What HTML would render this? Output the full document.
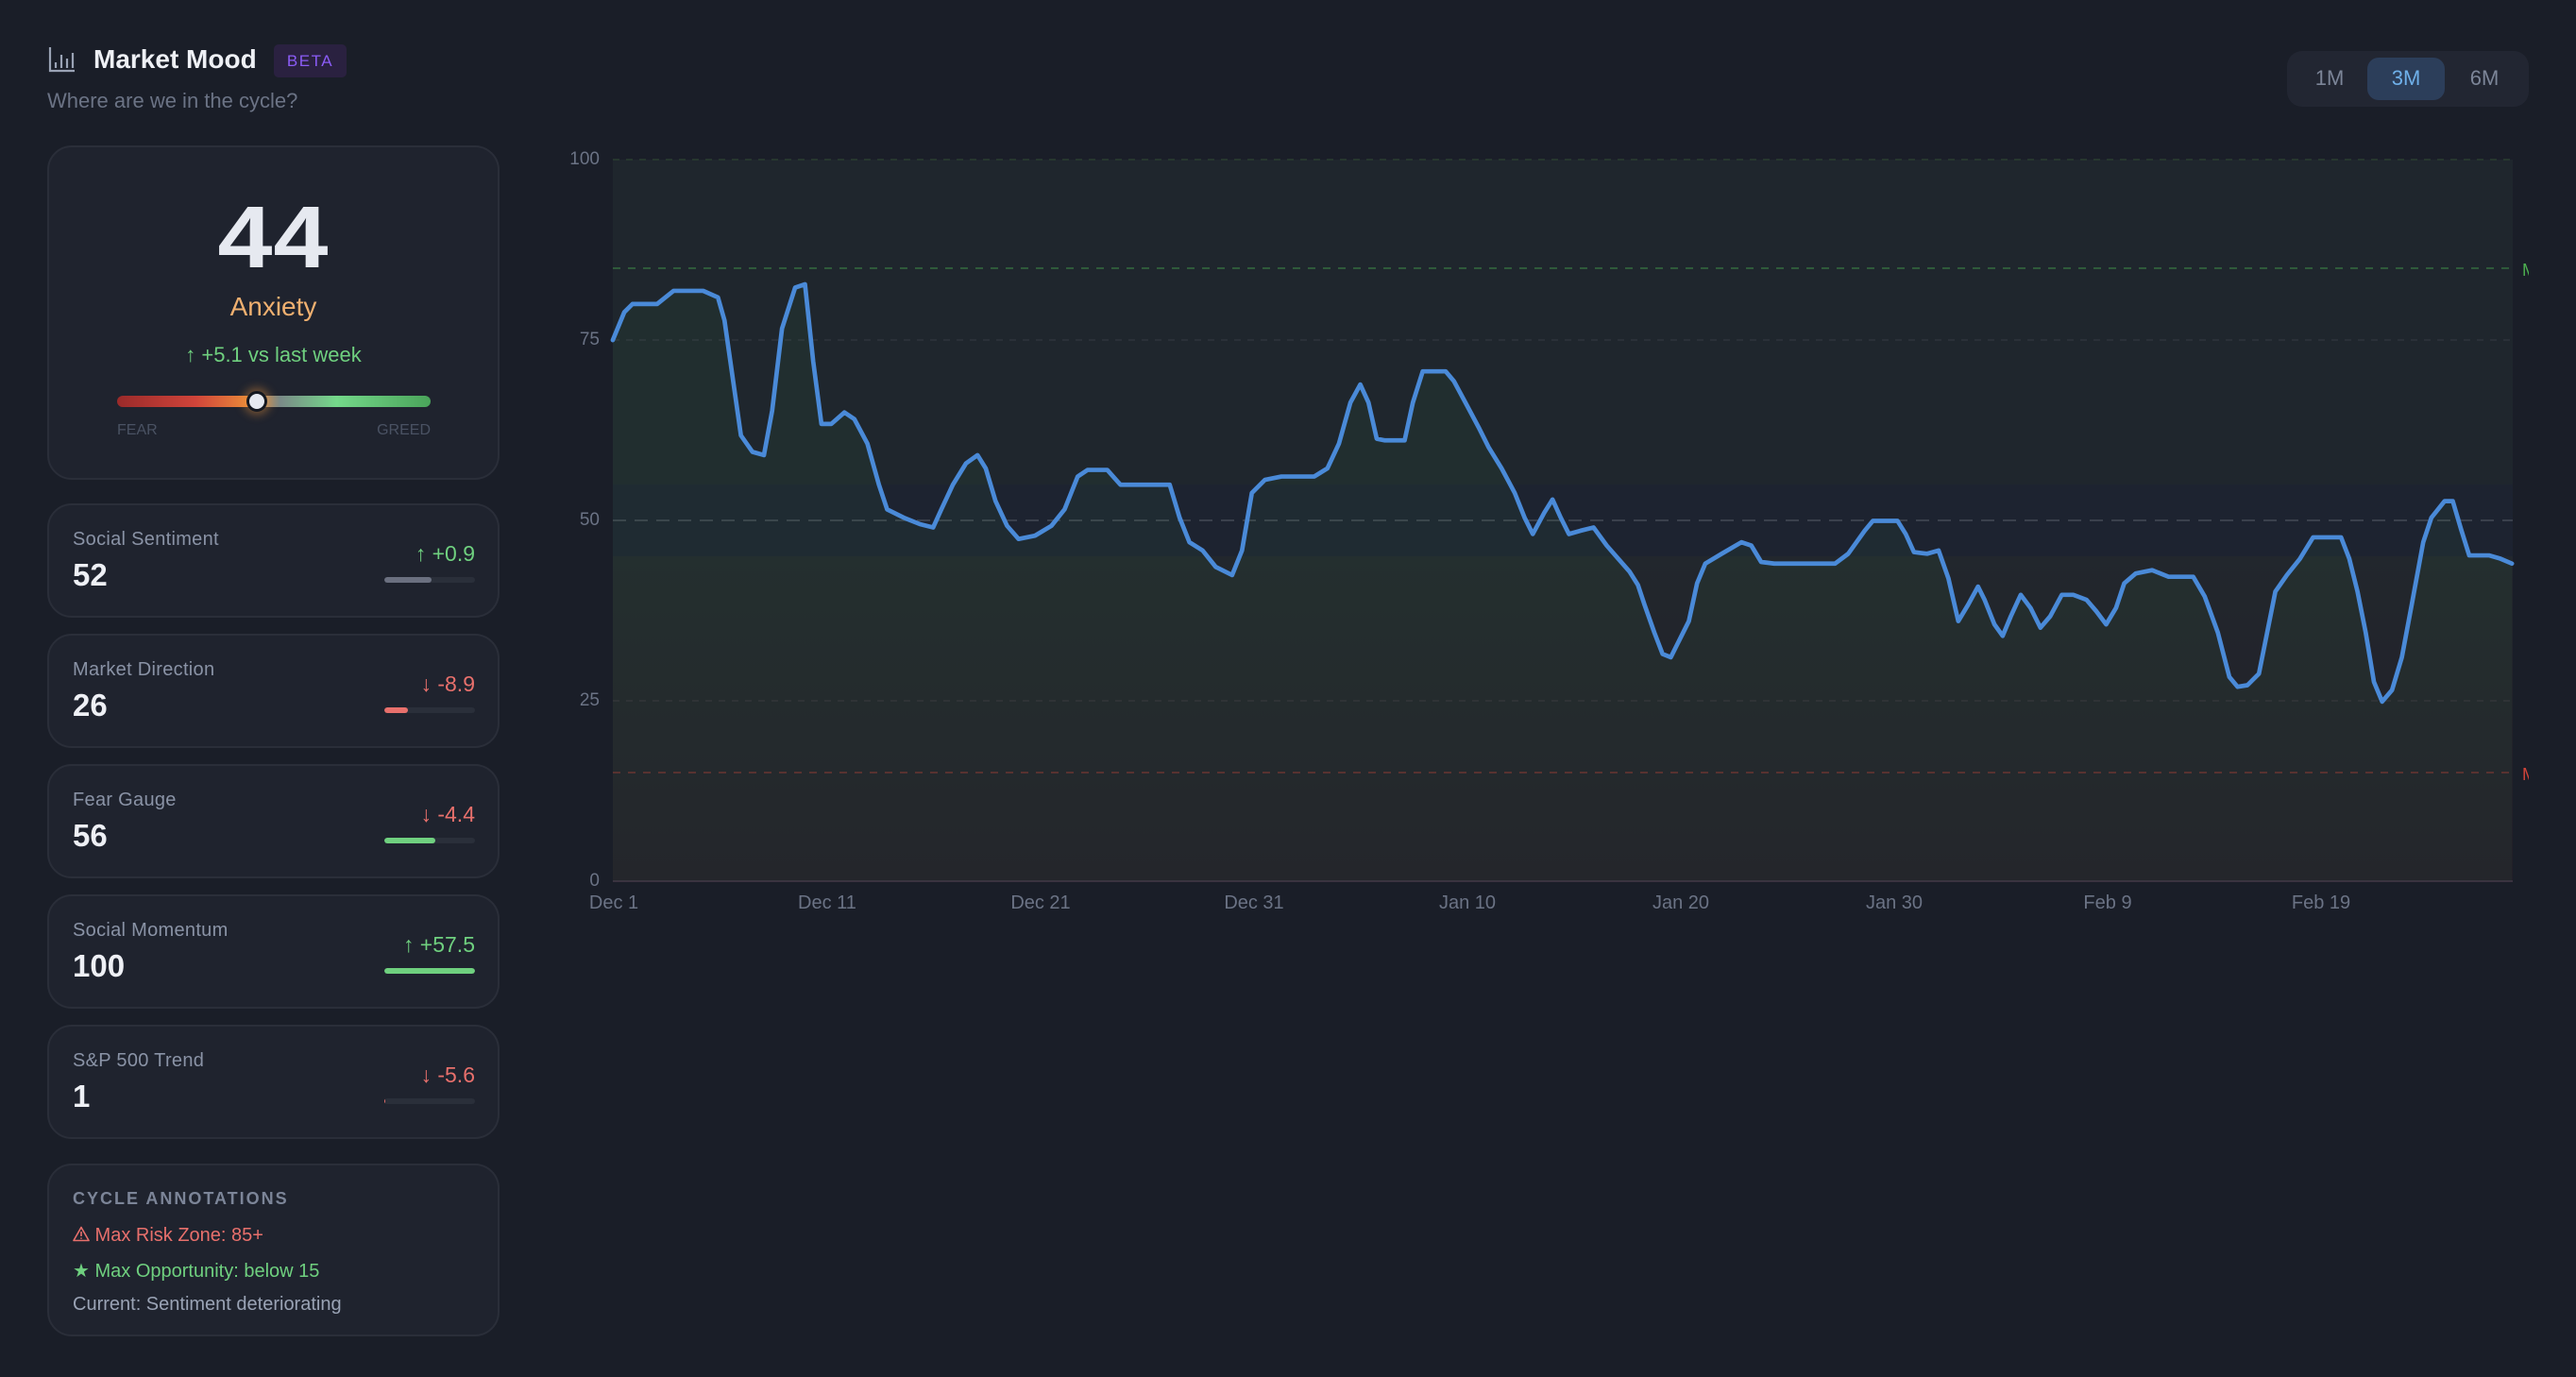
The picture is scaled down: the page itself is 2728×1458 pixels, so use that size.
<!DOCTYPE html>
<html><head><meta charset="utf-8">
<style>
*{margin:0;padding:0;box-sizing:border-box}
html,body{width:2728px;height:1458px;background:#1a1e28;overflow:hidden;font-family:"Liberation Sans",sans-serif;}
.a{position:absolute}
.card{position:absolute;left:50px;width:479px;background:#1f232e;border:2px solid #2a2e39;border-radius:26px}
.lbl{position:absolute;left:25px;top:25px;font-size:20px;color:#8a93a6;letter-spacing:.3px}
.val{position:absolute;left:25px;top:55px;font-size:33px;font-weight:bold;color:#eef0f5}
.chg{position:absolute;right:24px;top:38px;font-size:23px}
.bar{position:absolute;right:24px;top:76px;width:96px;height:6px;border-radius:3px;background:#2a2f3a;overflow:hidden}
.bar i{display:block;height:100%;border-radius:3px}
.g{color:#6fd07f}.r{color:#e8706c}
.yl{position:absolute;width:60px;text-align:right;font-size:19px;color:#6b7385;left:575px}
.xl{position:absolute;top:945px;width:120px;margin-left:-60px;text-align:center;font-size:20px;color:#6b7385}
</style></head><body>

<!-- header -->
<svg class="a" style="left:50px;top:48px" width="30" height="30" viewBox="0 0 30 30"><path d="M3 2V27H29" fill="none" stroke="#9aa3b5" stroke-width="2.2"/><path d="M9 18V24M15 10V24M21 14V24M27 8V24" stroke="#9aa3b5" stroke-width="2.2"/></svg>
<div class="a" style="left:99px;top:47px;font-size:28px;font-weight:bold;color:#eef0f5">Market Mood</div>
<div class="a" style="left:290px;top:47px;width:77px;height:35px;border-radius:5px;background:#2a2140;color:#8b5cf6;font-size:17px;letter-spacing:1.5px;text-align:center;line-height:35px">BETA</div>
<div class="a" style="left:50px;top:94px;font-size:22px;color:#6b7385">Where are we in the cycle?</div>

<!-- toggle -->
<div class="a" style="left:2422px;top:54px;width:256px;height:59px;border-radius:16px;background:#222632"></div>
<div class="a" style="left:2507px;top:61px;width:82px;height:45px;border-radius:12px;background:#2c3e5a"></div>
<div class="a" style="left:2427px;top:70px;width:80px;text-align:center;font-size:22px;color:#7c8598">1M</div>
<div class="a" style="left:2508px;top:70px;width:80px;text-align:center;font-size:22px;color:#6fb0ea">3M</div>
<div class="a" style="left:2591px;top:70px;width:80px;text-align:center;font-size:22px;color:#7c8598">6M</div>

<!-- main card -->
<div class="card" style="top:154px;height:354px">
  <div class="a" style="left:0;width:100%;top:42px;text-align:center;font-size:93px;font-weight:bold;color:#e6e9f0;letter-spacing:1px;transform:scaleX(1.12)">44</div>
  <div class="a" style="left:0;width:100%;top:153px;text-align:center;font-size:28px;color:#f0b070">Anxiety</div>
  <div class="a g" style="left:0;width:100%;top:207px;text-align:center;font-size:22px">↑ +5.1 vs last week</div>
  <div class="a" style="left:72px;top:263px;width:332px;height:12px;border-radius:6px;background:linear-gradient(90deg,#9a2a2a 0%,#d0443a 25%,#ea8a3a 42%,#7a8a88 52%,#74d88a 70%,#4aa45a 100%)"></div>
  <div class="a" style="left:209px;top:258px;width:22px;height:22px;border-radius:50%;background:#e6e9f0;border:3px solid #141820;box-shadow:0 0 10px 3px rgba(240,150,60,.45)"></div>
  <div class="a" style="left:72px;top:291px;font-size:16px;color:#4a5263">FEAR</div>
  <div class="a" style="left:344px;width:60px;text-align:right;top:291px;font-size:16px;color:#4a5263">GREED</div>
</div>

<!-- metric cards -->
<div class="card" style="top:533px;height:121px"><div class="lbl">Social Sentiment</div><div class="val">52</div><div class="chg g">↑ +0.9</div><div class="bar"><i style="width:52%;background:#6b7080"></i></div></div>
<div class="card" style="top:671px;height:121px"><div class="lbl">Market Direction</div><div class="val">26</div><div class="chg r">↓ -8.9</div><div class="bar"><i style="width:26%;background:#e8706c"></i></div></div>
<div class="card" style="top:809px;height:121px"><div class="lbl">Fear Gauge</div><div class="val">56</div><div class="chg r">↓ -4.4</div><div class="bar"><i style="width:56%;background:#6fd07f"></i></div></div>
<div class="card" style="top:947px;height:121px"><div class="lbl">Social Momentum</div><div class="val">100</div><div class="chg g">↑ +57.5</div><div class="bar"><i style="width:100%;background:#6fd07f"></i></div></div>
<div class="card" style="top:1085px;height:121px"><div class="lbl">S&amp;P 500 Trend</div><div class="val">1</div><div class="chg r">↓ -5.6</div><div class="bar"><i style="width:1%;background:#e8706c"></i></div></div>

<!-- annotations -->
<div class="card" style="top:1232px;height:183px">
  <div class="a" style="left:25px;top:25px;font-size:18px;letter-spacing:2px;font-weight:bold;color:#7c8598">CYCLE ANNOTATIONS</div>
  <div class="a r" style="left:25px;top:63px;font-size:20px"><svg width="18" height="17" viewBox="0 0 18 17" style="vertical-align:-1px"><path d="M9 1.5L17 15.5H1Z" fill="none" stroke="#e8706c" stroke-width="1.6" stroke-linejoin="round"/><path d="M9 6V11M9 12.5V13.8" stroke="#e8706c" stroke-width="1.6"/></svg> Max Risk Zone: 85+</div>
  <div class="a g" style="left:25px;top:99px;font-size:20px">★ Max Opportunity: below 15</div>
  <div class="a" style="left:25px;top:136px;font-size:20px;color:#9aa3b5">Current: Sentiment deteriorating</div>
</div>

<!-- chart backgrounds -->
<div class="a" style="left:649px;top:169px;width:2012px;height:344px;background:#1f262d"></div>
<div class="a" style="left:649px;top:513px;width:2012px;height:76px;background:#1d2330"></div>
<div class="a" style="left:649px;top:589px;width:2012px;height:344px;background:linear-gradient(#22272d,#221e28)"></div>

<svg class="a" style="left:0;top:0" width="2728" height="1458">
  <defs><clipPath id="mc"><rect x="2671" y="0" width="7" height="1458"/></clipPath></defs>
  <g stroke-width="2" fill="none">
    <line x1="649" y1="169" x2="2661" y2="169" stroke="#27372f" stroke-dasharray="7 7"/>
    <line x1="649" y1="284" x2="2661" y2="284" stroke="#2f5a3a" stroke-dasharray="8 8"/>
    <line x1="649" y1="360" x2="2661" y2="360" stroke="#2a3038" stroke-dasharray="7 7"/>
    <line x1="649" y1="551" x2="2661" y2="551" stroke="#3a404c" stroke-dasharray="14 9"/>
    <line x1="649" y1="742" x2="2661" y2="742" stroke="#2e2c34" stroke-dasharray="7 7"/>
    <line x1="649" y1="818" x2="2661" y2="818" stroke="#5a2a2e" stroke-dasharray="8 8"/>
    <line x1="649" y1="933" x2="2661" y2="933" stroke="#3a3240"/>
  </g>
  <g clip-path="url(#mc)">
  <text x="2671" y="292" font-family="Liberation Sans" font-size="18" fill="#4caf50">M</text>
  <text x="2671" y="826" font-family="Liberation Sans" font-size="18" fill="#d0443a">M</text>
  </g>
  <g transform="scale(1.7398)">
    <polygon fill="rgba(70,150,90,0.07)" points="373,536 373,207 380,190 385,185 400,185 410,177 428,177 437,181 441,195 446,230 451,265 458,275 465,277 470,250 476,200 484,175 490,173 495,220 500,258 506,258 514,251 520,255 528,270 535,295 540,310 550,315 560,319 568,321 573,310 580,295 588,282 595,277 600,285 606,305 613,320 620,328 630,326 640,320 648,310 656,290 662,286 674,286 682,295 690,295 712,295 718,315 724,330 732,335 740,345 750,350 756,335 762,300 770,292 780,290 800,290 808,285 815,270 822,245 828,234 833,245 838,267 843,268 855,268 860,245 866,226 880,226 885,232 892,245 900,260 906,272 914,285 922,300 928,315 933,325 940,312 945,304 950,315 955,325 962,323 970,321 978,332 985,340 992,348 997,356 1001,368 1007,385 1012,398 1017,400 1022,390 1028,378 1033,355 1038,343 1048,337 1060,330 1066,332 1072,342 1080,343 1117,343 1125,337 1135,323 1140,317 1155,317 1160,325 1165,336 1173,337 1180,335 1186,352 1192,378 1198,368 1204,357 1208,365 1214,380 1219,387 1224,375 1230,362 1236,370 1242,382 1248,375 1255,362 1262,362 1270,365 1276,372 1282,380 1288,370 1293,355 1300,349 1310,347 1320,351 1335,351 1342,363 1350,385 1357,412 1362,418 1368,417 1375,410 1380,385 1385,360 1392,350 1400,340 1408,327 1425,327 1430,340 1435,360 1440,385 1445,415 1450,427 1456,420 1462,400 1468,368 1475,330 1480,315 1488,305 1493,305 1498,322 1503,338 1515,338 1522,340 1529,343 1529,536"/>
    <polyline fill="none" stroke="#4a8ad8" stroke-width="2.7" stroke-linejoin="round" stroke-linecap="round" points="373,207 380,190 385,185 400,185 410,177 428,177 437,181 441,195 446,230 451,265 458,275 465,277 470,250 476,200 484,175 490,173 495,220 500,258 506,258 514,251 520,255 528,270 535,295 540,310 550,315 560,319 568,321 573,310 580,295 588,282 595,277 600,285 606,305 613,320 620,328 630,326 640,320 648,310 656,290 662,286 674,286 682,295 690,295 712,295 718,315 724,330 732,335 740,345 750,350 756,335 762,300 770,292 780,290 800,290 808,285 815,270 822,245 828,234 833,245 838,267 843,268 855,268 860,245 866,226 880,226 885,232 892,245 900,260 906,272 914,285 922,300 928,315 933,325 940,312 945,304 950,315 955,325 962,323 970,321 978,332 985,340 992,348 997,356 1001,368 1007,385 1012,398 1017,400 1022,390 1028,378 1033,355 1038,343 1048,337 1060,330 1066,332 1072,342 1080,343 1117,343 1125,337 1135,323 1140,317 1155,317 1160,325 1165,336 1173,337 1180,335 1186,352 1192,378 1198,368 1204,357 1208,365 1214,380 1219,387 1224,375 1230,362 1236,370 1242,382 1248,375 1255,362 1262,362 1270,365 1276,372 1282,380 1288,370 1293,355 1300,349 1310,347 1320,351 1335,351 1342,363 1350,385 1357,412 1362,418 1368,417 1375,410 1380,385 1385,360 1392,350 1400,340 1408,327 1425,327 1430,340 1435,360 1440,385 1445,415 1450,427 1456,420 1462,400 1468,368 1475,330 1480,315 1488,305 1493,305 1498,322 1503,338 1515,338 1522,340 1529,343"/>
  </g>
</svg>

<!-- axis labels -->
<div class="yl" style="top:158px">100</div>
<div class="yl" style="top:349px">75</div>
<div class="yl" style="top:540px">50</div>
<div class="yl" style="top:731px">25</div>
<div class="yl" style="top:922px">0</div>
<div class="xl" style="left:650px">Dec 1</div>
<div class="xl" style="left:876px">Dec 11</div>
<div class="xl" style="left:1102px">Dec 21</div>
<div class="xl" style="left:1328px">Dec 31</div>
<div class="xl" style="left:1554px">Jan 10</div>
<div class="xl" style="left:1780px">Jan 20</div>
<div class="xl" style="left:2006px">Jan 30</div>
<div class="xl" style="left:2232px">Feb 9</div>
<div class="xl" style="left:2458px">Feb 19</div>

</body></html>
